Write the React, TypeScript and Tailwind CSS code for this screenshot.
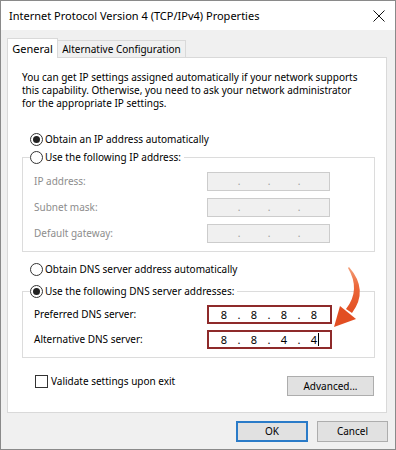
import React from 'react';

const font = 'font-["Segoe_UI","Noto_Sans",sans-serif]';

function Radio({ checked }: { checked?: boolean }) {
  return (
    <span className="w-[13px] h-[13px] rounded-full border border-[#333] bg-white flex items-center justify-center shrink-0">
      {checked && <span className="w-[7px] h-[7px] rounded-full bg-[#222]" />}
    </span>
  );
}

function IpBox({ values, disabled, cursor }: { values?: string[]; disabled?: boolean; cursor?: boolean }) {
  const parts = values ?? ['', '', '', ''];
  return (
    <div
      className={
        disabled
          ? 'w-[123px] h-[19px] border border-[#cccccc] bg-[#f0f0f0] flex items-center pl-[2px] text-[#9a9a9a]'
          : 'w-[125px] h-[19px] border-2 border-[#8e2a2a] bg-white flex items-center pl-[1px] text-black text-[11px]'
      }
    >
      {parts.map((p, i) => (
        <React.Fragment key={i}>
          <span className="w-[28px] flex justify-center">
            <span className="relative">
              {p}
              {cursor && i === 3 && <span className="absolute left-full ml-[1px] top-[0px] w-px h-[13px] bg-black" />}
            </span>
          </span>
          {i < 3 && <span className="w-[2px] flex justify-center">.</span>}
        </React.Fragment>
      ))}
    </div>
  );
}

function Row({ label, disabled, children }: { label: string; disabled?: boolean; children: React.ReactNode }) {
  return (
    <div className="flex items-center h-[19px]">
      <span className={`w-[173px] ${disabled ? 'text-[#8d8d8d]' : 'text-black'}`}>{label}</span>
      {children}
    </div>
  );
}

export default function App() {
  return (
    <div className={`relative w-[396px] h-[450px] bg-[#f0f0f0] border border-[#8a8a8a] flex flex-col text-[10px] leading-[13px] text-black ${font}`}>
      {/* Title bar */}
      <div className="h-[29px] bg-white flex items-center justify-between pl-[8px] pr-[10px]">
        <span className="text-[11px]">Internet Protocol Version 4 (TCP/IPv4) Properties</span>
        <svg width="12" height="12" viewBox="0 0 12 12">
          <path d="M0.5 0.5 L11.5 11.5 M11.5 0.5 L0.5 11.5" stroke="#111" strokeWidth="1" />
        </svg>
      </div>

      <div className="flex flex-col pl-[6px] pr-[8px]">
        {/* Tabs */}
        <div className="mt-[8px] h-[19px] flex items-end whitespace-nowrap">
          <div className="relative z-10 h-[20px] mb-[-1px] w-[51px] bg-white border-l border-t border-r border-[#d9d9d9] flex items-center justify-center text-[11px]">
            General
          </div>
          <div className="h-[17px] w-[128px] bg-[#f0f0f0] border-t border-r border-[#d9d9d9] flex items-center justify-center">
            Alternative Configuration
          </div>
        </div>

        {/* Panel */}
        <div className="h-[356px] bg-white border border-[#d9d9d9] flex flex-col pt-[13px] pl-[14px] pr-[11px]">
          <p className="whitespace-nowrap">
            You can get IP settings assigned automatically if your network supports
            <br />
            this capability. Otherwise, you need to ask your network administrator
            <br />
            for the appropriate IP settings.
          </p>

          <div className="mt-[21px] ml-[8px] h-[16px] flex items-center gap-[2px]">
            <Radio checked />
            <span>Obtain an IP address automatically</span>
          </div>

          <fieldset className="mt-[2px] border border-[#dcdcdc] px-[7px] pb-[8px]">
            <legend className="pr-[3px]">
              <span className="h-[16px] flex items-center gap-[2px]">
                <Radio />
                <span>Use the following IP address:</span>
              </span>
            </legend>
            <div className="mt-[7px] ml-[4px] flex flex-col gap-[7px]">
              <Row label="IP address:" disabled>
                <IpBox disabled />
              </Row>
              <Row label="Subnet mask:" disabled>
                <IpBox disabled />
              </Row>
              <Row label="Default gateway:" disabled>
                <IpBox disabled />
              </Row>
            </div>
          </fieldset>

          <div className="mt-[9px] ml-[8px] h-[16px] flex items-center gap-[2px]">
            <Radio />
            <span>Obtain DNS server address automatically</span>
          </div>

          <fieldset className="mt-[6px] border border-[#dcdcdc] px-[7px] pb-[8px]">
            <legend className="pr-[3px]">
              <span className="h-[16px] flex items-center gap-[2px]">
                <Radio checked />
                <span>Use the following DNS server addresses:</span>
              </span>
            </legend>
            <div className="mt-[6px] ml-[4px] flex flex-col gap-[6px]">
              <Row label="Preferred DNS server:">
                <IpBox values={['8', '8', '8', '8']} />
              </Row>
              <Row label="Alternative DNS server:">
                <IpBox values={['8', '8', '4', '4']} cursor />
              </Row>
            </div>
          </fieldset>

          <div className="mt-[17px] flex justify-between items-start">
            <div className="ml-[13px] h-[13px] flex items-center gap-[3px]">
              <span className="w-[13px] h-[13px] border border-[#333] bg-white shrink-0" />
              <span>Validate settings upon exit</span>
            </div>
            <button className="mt-[1px] mr-[1px] w-[87px] h-[20px] bg-[#e1e1e1] border border-[#adadad] flex items-center justify-center">
              Advanced...
            </button>
          </div>
        </div>

        {/* Dialog buttons */}
        <div className="mt-[8px] flex justify-end gap-[9px] mr-[-1px]">
          <button className="w-[72px] h-[21px] bg-[#e1e1e1] border-2 border-[#2a7bc8] flex items-center justify-center">
            OK
          </button>
          <button className="w-[71px] h-[21px] bg-[#e1e1e1] border border-[#adadad] flex items-center justify-center">
            Cancel
          </button>
        </div>
      </div>

      {/* Orange arrow overlay */}
      <svg className="absolute left-[324px] top-[261px]" width="50" height="72" viewBox="325 262 50 72">
        <defs>
          <linearGradient id="arr" x1="0" y1="0" x2="0" y2="1">
            <stop offset="0" stopColor="#f4a07a" />
            <stop offset="0.4" stopColor="#ec6a3c" />
            <stop offset="1" stopColor="#e24e22" />
          </linearGradient>
        </defs>
        <path d="M349 267 Q369 290 352 313 L346 309 Q361 290 348 268 Z" fill="url(#arr)" />
        <path d="M334 327 L340 306 L356 319 Z" fill="#e24e22" />
      </svg>
    </div>
  );
}
